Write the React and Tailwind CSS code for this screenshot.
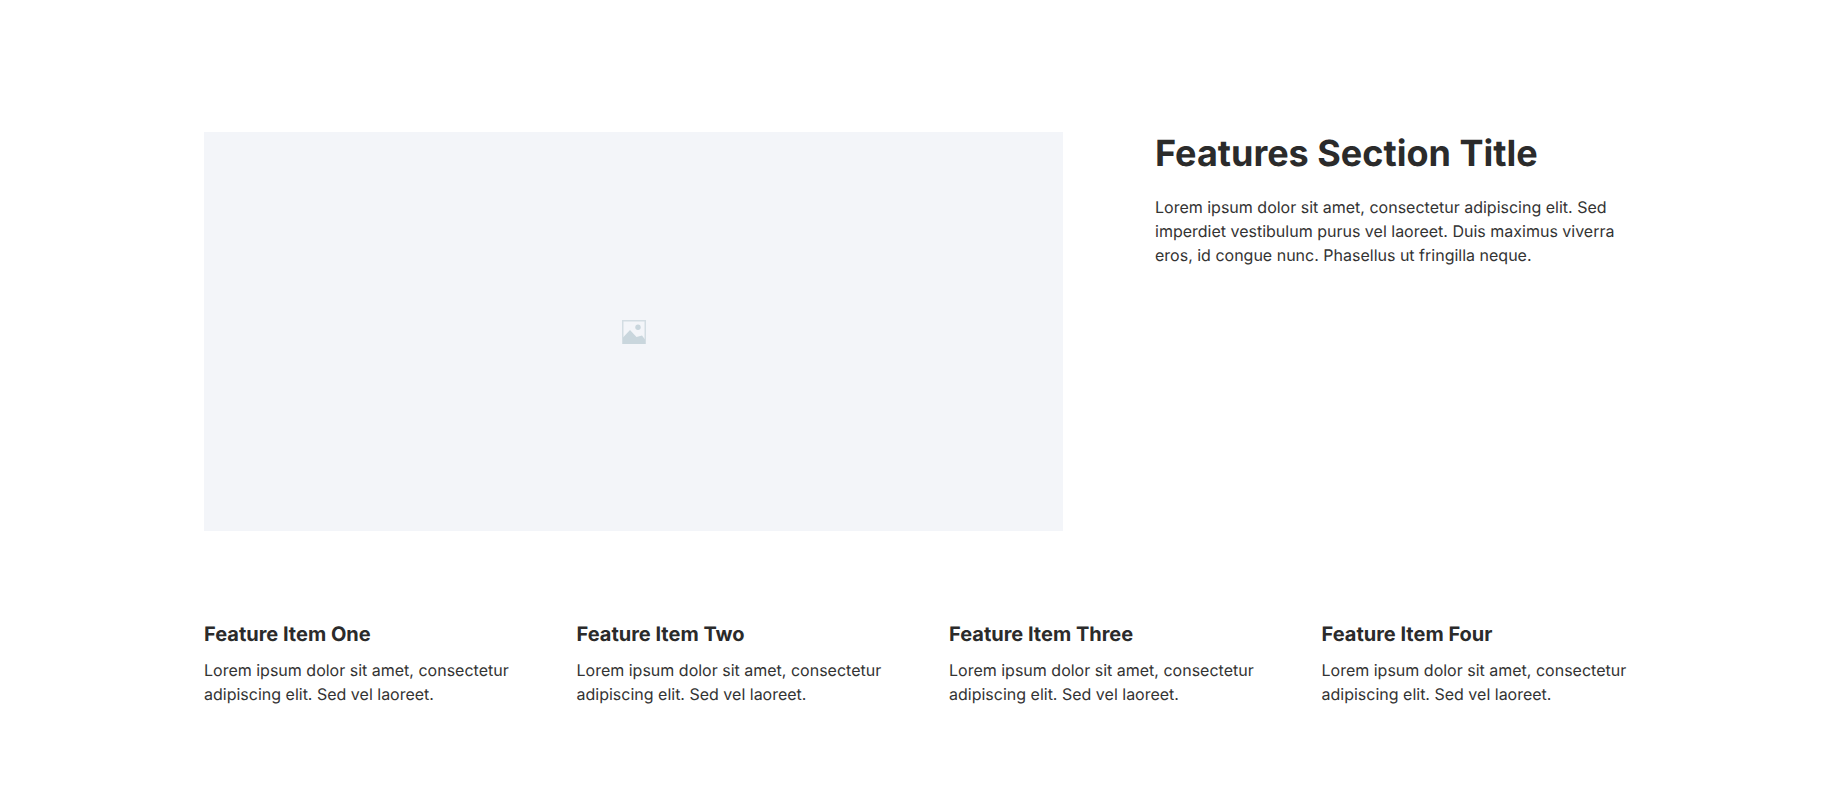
export default function App() {
  const items = ["Feature Item One", "Feature Item Two", "Feature Item Three", "Feature Item Four"];
  return (
    <div className="min-h-[805px] bg-white font-['Inter',sans-serif] text-[#2b2b2b] [text-rendering:geometricPrecision]">
      <div className="mx-auto flex w-[1440px] flex-col gap-[91px] pt-[132px]">
        <div className="flex gap-[92px]">
          <div className="flex h-[399px] w-[859px] items-center justify-center bg-[#f3f5f9]">
            <svg width="24" height="24" viewBox="0 0 24 24">
              <rect x="0.75" y="0.75" width="22.5" height="22.5" fill="#f3f5f9" stroke="#d3dde3" strokeWidth="1.5" />
              <circle cx="16" cy="7.3" r="2.7" fill="#c9d6dd" />
              <path d="M1 24V17.5L8 10L14.5 17L20 15.5L23 19.5V24Z" fill="#c9d6dd" />
            </svg>
          </div>
          <div className="w-[489px]">
            <h2 className="text-[36px] leading-[1.2] font-bold">Features Section Title</h2>
            <p className="mt-5 text-base leading-6 text-[#333333]">
              Lorem ipsum dolor sit amet, consectetur adipiscing elit. Sed imperdiet vestibulum purus vel laoreet. Duis maximus viverra eros, id congue nunc. Phasellus ut fringilla neque.
            </p>
          </div>
        </div>
        <div className="grid grid-cols-4 gap-[50px]">
          {items.map((t) => (
            <div key={t}>
              <h3 className="text-xl leading-[1.2] font-bold">{t}</h3>
              <p className="mt-3 text-base leading-6 text-[#333333]">Lorem ipsum dolor sit amet, consectetur adipiscing elit. Sed vel laoreet.</p>
            </div>
          ))}
        </div>
      </div>
    </div>
  );
}
